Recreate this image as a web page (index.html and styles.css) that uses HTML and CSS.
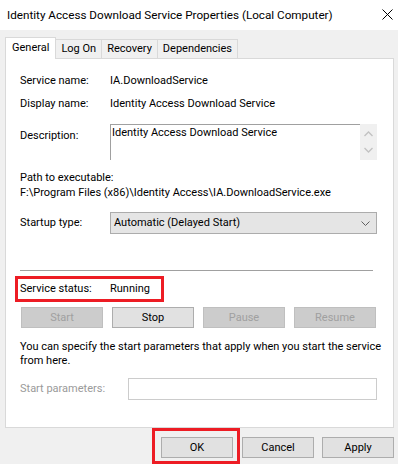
FILE: index.html
```html
<!DOCTYPE html>
<html>
<head>
<meta charset="utf-8">
<link rel="stylesheet" href="styles.css">
</head>
<body>
<div class="titlebar">
  <span class="title">Identity Access Download Service Properties (Local Computer)</span>
  <svg class="close" width="11" height="11" viewBox="0 0 11 11"><path d="M0.5 0.5 L10.5 10.5 M10.5 0.5 L0.5 10.5" stroke="#000" stroke-width="1" fill="none"/></svg>
</div>
<div class="tabs">
  <div class="tab selected">General</div>
  <div class="tab">Log On</div>
  <div class="tab">Recovery</div>
  <div class="tab">Dependencies</div>
</div>
<div class="panel">
  <div class="row r1"><span class="label">Service name:</span><span>IA.DownloadService</span></div>
  <div class="row r2"><span class="label">Display name:</span><span>Identity Access Download Service</span></div>
  <div class="row rdesc">
    <span class="label desc-label">Description:</span>
    <div class="descbox">
      <div class="desctext">Identity Access Download Service</div>
      <div class="scrollbar">
        <svg width="9" height="6" viewBox="0 0 9 6"><polyline points="0.5,5 4.5,1 8.5,5" stroke="#c2c2c2" stroke-width="1.3" fill="none"/></svg>
        <svg width="9" height="6" viewBox="0 0 9 6"><polyline points="0.5,1 4.5,5 8.5,1" stroke="#c2c2c2" stroke-width="1.3" fill="none"/></svg>
      </div>
    </div>
  </div>
  <div class="path">
    <div>Path to executable:</div>
    <div>F:\Program Files (x86)\Identity Access\IA.DownloadService.exe</div>
  </div>
  <div class="row rstartup">
    <span class="label">Startup type:</span>
    <div class="combo">
      <span>Automatic (Delayed Start)</span>
      <svg width="9" height="5" viewBox="0 0 9 5"><polyline points="0.5,0.5 4.5,4.5 8.5,0.5" stroke="#606060" stroke-width="1" fill="none"/></svg>
    </div>
  </div>
  <div class="separator"></div>
  <div class="status"><span class="label">Service status:</span><span>Running</span></div>
  <div class="svcbuttons">
    <div class="btn disabled">Start</div>
    <div class="btn">Stop</div>
    <div class="btn disabled">Pause</div>
    <div class="btn disabled">Resume</div>
  </div>
  <div class="para">You can specify the start parameters that apply when you start the service<br>from here.</div>
  <div class="row rparams">
    <span class="label params-label">Start parameters:</span>
    <div class="paraminput"></div>
  </div>
</div>
<div class="footer">
  <div class="highlight"><div class="btn fbtn">OK</div></div>
  <div class="btn fbtn cancel">Cancel</div>
  <div class="btn fbtn apply">Apply</div>
</div>
</body>
</html>
```

FILE: styles.css
```css
* { box-sizing: border-box; }
body {
  margin: 0;
  width: 398px;
  height: 464px;
  overflow: hidden;
  background: #f0f0f0;
  font-family: Roboto, "Liberation Sans", sans-serif;
  font-size: 11px;
  line-height: 16px;
  color: #000;
}
.titlebar {
  height: 30px;
  background: #fff;
  display: flex;
  align-items: center;
  justify-content: space-between;
  padding: 0 5px 0 7px;
}
.title { font-size: 11.7px; }
.close { margin-top: -1px; }
.tabs {
  display: flex;
  align-items: flex-end;
  height: 21px;
  margin: 7px 0 0 5px;
  position: relative;
  z-index: 1;
}
.tab {
  height: 19px;
  line-height: 18px;
  padding: 0 5px;
  border: 1px solid #d9d9d9;
  border-bottom: none;
  border-left: none;
  background: #f0f0f0;
}
.tab.selected {
  height: 22px;
  margin-bottom: -1px;
  background: #fff;
  border-left: 1px solid #d9d9d9;
  line-height: 19px;
  padding: 0 6px;
}
.panel {
  margin: 0 4px 0 5px;
  height: 370px;
  background: #fff;
  border: 1px solid #d9d9d9;
  padding: 0 16px 0 14px;
}
.row { display: flex; align-items: center; }
.label { width: 90px; flex: none; }
.r1 { margin-top: 14px; }
.r2 { margin-top: 7px; }
.rdesc { margin-top: 12px; align-items: flex-start; }
.desc-label { padding-top: 4px; }
.descbox {
  display: flex;
  width: 267px;
  height: 36px;
}
.desctext {
  flex: 1;
  border-top: 1px solid #a0a0a0;
  border-left: 1px solid #a0a0a0;
  padding: 0 1px;
  line-height: 15px;
}
.scrollbar {
  width: 17px;
  background: #f0f0f0;
  display: flex;
  flex-direction: column;
  align-items: center;
  justify-content: space-between;
  padding: 7px 0 7px;
}
.path { margin-top: 10px; line-height: 15px; }
.rstartup { margin-top: 12px; }
.combo {
  width: 267px;
  height: 22px;
  background: #e5e5e5;
  border: 1px solid #acacac;
  display: flex;
  align-items: center;
  justify-content: space-between;
  padding: 0 6px 0 3px;
}
.separator {
  margin-top: 36px;
  width: 353px;
  height: 1px;
  background: #a0a0a0;
}
.status {
  margin: 5px 0 0 -5px;
  width: 149px;
  height: 26px;
  border: 3px solid #ed1c24;
  padding: 2px;
  display: flex;
  align-items: center;
}
.svcbuttons {
  margin: 5px 1px 0;
  display: grid;
  grid-template-columns: repeat(4, 1fr);
  column-gap: 9px;
}
.btn {
  height: 21px;
  background: #e1e1e1;
  border: 1px solid #adadad;
  display: flex;
  align-items: center;
  justify-content: center;
}
.btn.disabled {
  background: #cccccc;
  border-color: #bfbfbf;
  color: #a0a0a0;
}
.para { margin-top: 12px; line-height: 14px; white-space: nowrap; }
.rparams { margin-top: 10px; }
.params-label { width: 108px; color: #9a9a9a; }
.paraminput {
  width: 249px;
  height: 22px;
  background: #fff;
  border: 1px solid #cccccc;
}
.footer {
  display: flex;
  justify-content: flex-end;
  align-items: flex-start;
  padding-right: 4px;
}
.highlight {
  border: 3px solid #ed1c24;
  padding: 6px 4px 3px 6px;
}
.fbtn { width: 72px; }
.cancel { margin: 9px 0 0 2px; }
.apply { margin: 9px 0 0 8px; }
```
